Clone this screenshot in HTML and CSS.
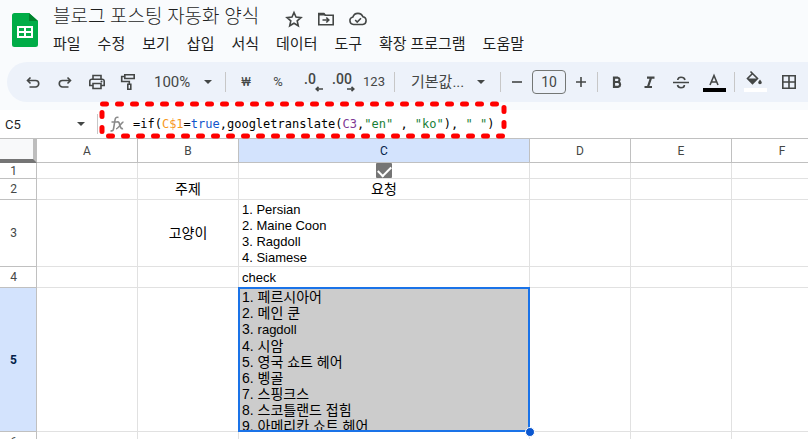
FILE: index.html
```html
<!DOCTYPE html>
<html lang="ko">
<head>
    <meta charset="UTF-8">
    <meta name="viewport" content="width=device-width, initial-scale=1.0">
    <title>블로그 포스팅 자동화 양식</title>
    <link rel="stylesheet" href="styles.css">
</head>
<body>
    <header class="header">
        <svg class="logo" viewBox="0 0 26 34" width="26" height="34">
            <path d="M2.5 0H17l9 8v23.500a2.500 2.500 0 0 1-2.500 2.500h-21A2.500 2.500 0 0 1 0 31.500v-29A2.500 2.500 0 0 1 2.500 0z" fill="#00ac47"/>
            <path d="M17 0l9 8h-9z" fill="#00832d"/>
            <path d="M5 13h16v12H5zM7 15v3h5v-3zM14 15v3h5v-3zM7 20v3h5v-3zM14 20v3h5v-3z" fill="#fff" fill-rule="evenodd"/>
        </svg>
        <div class="header-main">
            <div class="title-row">
                <h1 class="title">블로그 포스팅 자동화 양식</h1>
                <div class="title-icons">
                    <button class="icon-button" aria-label="별표">
                        <svg viewBox="0 0 18 18" width="18" height="18"><path d="M9 2.500l2 4.600 5 .5-3.800 3.300 1.100 4.900L9 13.200l-4.300 2.600 1.100-4.900L2 7.600l5-.5z" class="line"/></svg>
                    </button>
                    <button class="icon-button" aria-label="이동">
                        <svg viewBox="0 0 18 18" width="18" height="18"><path d="M1.800 14.700V3.500h5l1.500 1.800h7.900v9.400z" class="line"/><path d="M1.500 3h5.500l2 2.500H1.500z" class="solid"/><path d="M5.500 10h6M9.300 7.500l2.500 2.500-2.500 2.500" class="line"/></svg>
                    </button>
                    <button class="icon-button" aria-label="문서 상태">
                        <svg viewBox="0 0 20 18" width="20" height="18"><path d="M5.500 14.500a3.800 3.800 0 0 1-.6-7.500 5.300 5.300 0 0 1 10-.2 3.900 3.900 0 0 1-.2 7.700z" class="line"/><path d="M7.200 10l2 2 3.800-3.800" class="line"/></svg>
                    </button>
                </div>
            </div>
            <nav class="menu">
                <button>파일</button>
                <button>수정</button>
                <button>보기</button>
                <button>삽입</button>
                <button>서식</button>
                <button>데이터</button>
                <button>도구</button>
                <button>확장 프로그램</button>
                <button>도움말</button>
            </nav>
        </div>
    </header>

    <div class="toolbar">
        <button class="tool" aria-label="실행취소">
            <svg viewBox="0 0 18 18" width="18" height="18"><path d="M6.500 4.500L3.500 7.500l3 3M4 7.500h7.500a3.200 3.200 0 0 1 0 6.500H5.500" class="line"/></svg>
        </button>
        <button class="tool" aria-label="재실행">
            <svg viewBox="0 0 18 18" width="18" height="18"><path d="M11.500 4.500l3 3-3 3M14 7.500H6.500a3.200 3.200 0 0 0 0 6.500h6" class="line"/></svg>
        </button>
        <button class="tool" aria-label="인쇄">
            <svg viewBox="0 0 18 18" width="18" height="18"><path d="M5 6V2.500h8V6M5 12.500H1.800V8.300A2 2 0 0 1 3.800 6.200h10.400a2 2 0 0 1 2 2.100v4.200H13M5 10.500h8v5H5z" class="line"/><circle cx="13.500" cy="8.500" r="1" class="solid"/></svg>
        </button>
        <button class="tool" aria-label="서식 복사">
            <svg viewBox="0 0 18 18" width="18" height="18"><path d="M4.800 1.800h9.400v3.700H4.800zM4.800 3.500H1.700V8.500h7.600v2.500M7.800 11.200h3v5h-3z" class="line"/></svg>
        </button>
        <div class="select-box zoom">
            <select aria-label="확대/축소"><option>100%</option></select>
        </div>
        <span class="divider"></span>
        <button class="tool symbol">₩</button>
        <button class="tool symbol">%</button>
        <button class="tool decimal" aria-label="소수점 이하 자릿수 감소">
            <span>.0</span>
            <svg viewBox="0 0 8 6" width="8" height="6"><path d="M8 3H1.500M3.500.800L1.200 3l2.300 2.200" class="line"/></svg>
        </button>
        <button class="tool decimal" aria-label="소수점 이하 자릿수 증가">
            <span>.00</span>
            <svg viewBox="0 0 8 6" width="8" height="6"><path d="M0 3h6.500M4.500.800L6.800 3 4.500 5.200" class="line"/></svg>
        </button>
        <button class="tool number">123</button>
        <span class="divider"></span>
        <div class="select-box font">
            <select aria-label="글꼴"><option>기본값...</option></select>
        </div>
        <span class="divider"></span>
        <button class="tool small" aria-label="글꼴 크기 줄이기">
            <svg viewBox="0 0 12 12" width="12" height="12"><path d="M1 6h10" class="line"/></svg>
        </button>
        <input class="font-size" type="text" value="10" aria-label="글꼴 크기">
        <button class="tool small" aria-label="글꼴 크기 늘리기">
            <svg viewBox="0 0 12 12" width="12" height="12"><path d="M1 6h10M6 1v10" class="line"/></svg>
        </button>
        <span class="divider"></span>
        <button class="tool" aria-label="굵게">
            <svg viewBox="0 0 18 18" width="18" height="18"><path d="M5 4.700h3.800a2.200 2.200 0 0 1 0 4.300H5zM5 9h4.300a2.500 2.500 0 0 1 0 4.800H5z" class="line thick"/></svg>
        </button>
        <button class="tool" aria-label="기울임꼴">
            <svg viewBox="0 0 18 18" width="18" height="18"><path d="M6 4.700h7.500M3.500 14h7.500M10.100 4.700L6.900 14" class="line thick"/></svg>
        </button>
        <button class="tool" aria-label="취소선">
            <svg viewBox="0 0 18 18" width="18" height="18"><path d="M0 9.500h16M12 7C11.500 5.100 10 4.300 8 4.300S5 5 4.700 7M4.500 12c.4 1.800 1.700 2.700 3.500 2.700s3.400-.900 3.400-2.700" class="line"/></svg>
        </button>
        <button class="tool" aria-label="텍스트 색상">
            <svg viewBox="0 0 24 24" width="24" height="24"><path d="M8 15l4-9.500 4 9.500M9.500 12h5" class="line"/><path d="M1 18h23v4H1z" fill="#000"/></svg>
        </button>
        <span class="divider"></span>
        <button class="tool" aria-label="채우기 색상">
            <svg viewBox="0 0 24 24" width="24" height="24"><path d="M7.500 1.500l7 7-5 5-5-5 5-5" class="line"/><path d="M4.500 8.500h10l-5 5.200z" class="solid"/><path d="M17 9.500c1 1.300 1.800 2.200 1.800 3a1.800 1.800 0 0 1-3.600 0c0-.8.800-1.700 1.800-3z" class="solid"/><path d="M1 18h23v4H1z" fill="#fff"/></svg>
        </button>
        <button class="tool borders" aria-label="테두리">
            <svg viewBox="0 0 14 14" width="14" height="14"><path d="M.8.800h12.400v12.400H.8zM7 1v12M1 7h12" class="line"/></svg>
        </button>
    </div>

    <div class="formula-bar">
        <div class="select-box name-box">
            <input type="text" value="C5" aria-label="이름 상자">
        </div>
        <span class="divider"></span>
        <svg class="fx" viewBox="0 0 14 16" width="14" height="16"><path d="M8.500 1.500C6 .8 5.300 2 5 4L3.600 12.500C3.300 14.500 2.500 15.300.5 14.700M1.500 6h6M7 6c2-.6 2.300 1 2.800 3s1.200 4.300 3.200 3.500M13.500 6c-2 0-5 6.800-7.500 6.800"/></svg>
        <div class="formula" role="textbox" contenteditable="true" spellcheck="false" aria-label="수식">=if(<span class="ref-orange">C$1</span>=<span class="bool">true</span>,googletranslate(<span class="ref-purple">C3</span>,<span class="string">"en"</span> , <span class="string">"ko"</span>), <span class="string">" "</span>)</div>
        <svg class="highlight" viewBox="0 0 408 38" width="408" height="38"><path d="M3.500 3H405V35H3V5"/></svg>
    </div>

    <main class="sheet">
        <table class="grid">
            <colgroup>
                <col class="col-index">
                <col class="col">
                <col class="col">
                <col class="col-wide">
                <col class="col">
                <col class="col">
                <col class="col">
            </colgroup>
            <thead>
                <tr>
                    <td class="corner"></td>
                    <th>A</th>
                    <th>B</th>
                    <th class="active">C</th>
                    <th>D</th>
                    <th>E</th>
                    <th>F</th>
                </tr>
            </thead>
            <tbody>
                <tr class="row-1">
                    <th>1</th>
                    <td></td>
                    <td></td>
                    <td class="check-cell"><input type="checkbox" class="checkbox" aria-label="C1" checked></td>
                    <td></td>
                    <td></td>
                    <td></td>
                </tr>
                <tr class="row-2">
                    <th>2</th>
                    <td></td>
                    <td class="center">주제</td>
                    <td class="center">요청</td>
                    <td></td>
                    <td></td>
                    <td></td>
                </tr>
                <tr class="row-3">
                    <th>3</th>
                    <td></td>
                    <td class="center">고양이</td>
                    <td class="latin">1. Persian<br>2. Maine Coon<br>3. Ragdoll<br>4. Siamese</td>
                    <td></td>
                    <td></td>
                    <td></td>
                </tr>
                <tr class="row-4">
                    <th>4</th>
                    <td></td>
                    <td></td>
                    <td class="latin">check</td>
                    <td></td>
                    <td></td>
                    <td></td>
                </tr>
                <tr class="row-5">
                    <th class="active">5</th>
                    <td></td>
                    <td></td>
                    <td class="selected">
                        <div class="clip">1. 페르시아어<br>2. 메인 쿤<br>3. <span class="latin">ragdoll</span><br>4. 시암<br>5. 영국 쇼트 헤어<br>6. 벵골<br>7. 스핑크스<br>8. 스코틀랜드 접힘<br>9. 아메리칸 쇼트 헤어</div>
                        <span class="handle"></span>
                    </td>
                    <td></td>
                    <td></td>
                    <td></td>
                </tr>
                <tr class="row-6">
                    <th>6</th>
                    <td></td>
                    <td></td>
                    <td></td>
                    <td></td>
                    <td></td>
                    <td></td>
                </tr>
            </tbody>
        </table>
    </main>
</body>
</html>
```
FILE: styles.css
```css
:root {
    --page: #f9fbfd;
    --toolbar: #edf2fa;
    --icon: #444746;
    --text: #1f1f1f;
    --line: #e1e1e1;
    --line-dark: #c0c0c0;
    --active: #d3e3fd;
    --blue: #1a73e8;
    --sans: "Liberation Sans", "Noto Sans CJK KR", sans-serif;
    --ui: Roboto, "Noto Sans CJK KR", sans-serif;
}

* {
    box-sizing: border-box;
    margin: 0;
    padding: 0;
}

body {
    display: flex;
    flex-direction: column;
    height: 100vh;
    overflow: hidden;
    background: var(--page);
    color: var(--text);
    font-family: var(--ui);
}

button,
input,
select {
    border: none;
    background: none;
    color: inherit;
    font-family: inherit;
}

.line {
    fill: none;
    stroke: var(--icon);
    stroke-width: 1.6;
}

.thick {
    stroke-width: 2.2;
}

.solid {
    fill: var(--icon);
}

/* Header */
.header {
    display: flex;
    flex: none;
    gap: 15px;
    height: 62px;
    padding-left: 12px;
}

.logo {
    flex: none;
    margin-top: 13px;
}

.title-row {
    display: flex;
    align-items: center;
    gap: 25px;
    height: 34px;
}

.title {
    font-size: 19px;
    font-weight: 300;
    line-height: 34px;
    white-space: nowrap;
}

.title-icons {
    display: flex;
    gap: 12px;
    padding-top: 4px;
}

.icon-button {
    display: flex;
    align-items: center;
    justify-content: center;
    width: 20px;
    height: 20px;
}

.menu {
    display: flex;
    gap: 17px;
}

.menu button {
    font-size: 15px;
    line-height: 20px;
    white-space: nowrap;
}

/* Toolbar */
.toolbar {
    display: flex;
    flex: none;
    align-items: center;
    height: 40px;
    margin-left: 7px;
    padding-left: 10px;
    border-radius: 20px 0 0 20px;
    background: var(--toolbar);
    color: var(--icon);
}

.tool {
    display: flex;
    flex: none;
    align-items: center;
    justify-content: center;
    width: 32px;
    height: 32px;
    font-size: 14px;
}

.tool.small {
    width: 24px;
}

.tool.symbol,
.tool.number {
    padding-bottom: 2px;
    font-size: 13px;
}

.tool.borders {
    width: 36px;
}

.decimal {
    flex-direction: column;
    font-weight: 500;
    line-height: 14px;
}

.decimal svg {
    align-self: flex-end;
    margin-right: 3px;
}

.divider {
    flex: none;
    width: 1px;
    height: 20px;
    margin: 0 4px;
    background: #c7c7c7;
}

.select-box {
    position: relative;
    flex: none;
}

.select-box::after {
    content: "";
    position: absolute;
    top: 50%;
    right: 9px;
    margin-top: -2px;
    border: 4px solid transparent;
    border-top-color: var(--icon);
    border-bottom: none;
    pointer-events: none;
}

.select-box select {
    width: 100%;
    height: 32px;
    appearance: none;
    font-size: 15px;
}

.zoom {
    width: 76px;
    padding-left: 9px;
}

.font {
    width: 97px;
    padding-left: 12px;
}

.font::after {
    right: 11px;
}

.font-size {
    flex: none;
    width: 34px;
    height: 24px;
    margin: 0 3px;
    border: 1px solid #747775;
    border-radius: 4px;
    font-size: 14px;
    text-align: center;
}

/* Formula bar */
.formula-bar {
    position: relative;
    display: flex;
    flex: none;
    align-items: center;
    height: 28px;
    margin-top: 8px;
    background: #fff;
}

.name-box {
    width: 93px;
    padding-left: 5px;
}

.name-box::after {
    right: 8px;
}

.name-box input {
    display: block;
    width: 60px;
    height: 18px;
    font-size: 13px;
}

.fx {
    flex: none;
    margin: 0 9px 0 8px;
    fill: none;
    stroke: #8a8a8a;
    stroke-width: 1.6;
}

.formula {
    flex: 1;
    outline: none;
    color: #000;
    font-family: "DejaVu Sans Mono", monospace;
    font-size: 12px;
    white-space: pre;
}

.ref-orange {
    color: #f7981d;
}

.ref-purple {
    color: #7e3794;
}

.bool {
    color: #1155cc;
}

.string {
    color: #188038;
}

.highlight {
    position: absolute;
    top: -9px;
    left: 99px;
    z-index: 2;
    fill: none;
    stroke: #f00;
    stroke-width: 5;
    stroke-linecap: round;
    stroke-dasharray: 4 11;
    pointer-events: none;
}

/* Sheet */
.sheet {
    flex: 1;
    min-height: 0;
    overflow: hidden;
    border-top: 1px solid var(--line-dark);
    background: #fff;
}

.grid {
    width: 833px;
    table-layout: fixed;
    border-collapse: separate;
    border-spacing: 0;
    color: #000;
    font-family: var(--sans);
    font-size: 14px;
    line-height: 16px;
}

.col-index {
    width: 37px;
}

.col {
    width: 101px;
}

.col-wide {
    width: 291px;
}

.grid td {
    padding: 2px 3px 0;
    border-right: 1px solid var(--line);
    border-bottom: 1px solid var(--line);
}

.grid th {
    border-right: 1px solid var(--line-dark);
    border-bottom: 1px solid var(--line-dark);
    color: var(--icon);
    font-family: Roboto, sans-serif;
    font-size: 12px;
    font-weight: 400;
    line-height: 14px;
}

.grid thead tr {
    height: 24px;
}

.grid tbody th {
    padding-right: 9px;
}

.grid th.active {
    background: var(--active);
    color: #041e49;
}

.grid tbody th.active {
    font-weight: 700;
}

.grid .corner {
    border-right: 4px solid #bdbdbd;
    border-bottom: 4px solid #757575;
    background: #f8f9fa;
}

.row-1 {
    height: 16px;
}

.row-2,
.row-4,
.row-6 {
    height: 21px;
}

.row-3 {
    height: 67px;
}

.row-5 {
    height: 144px;
}

.grid .center {
    padding-top: 0;
    text-align: center;
}

.grid .latin {
    font-size: 13px;
}

.grid .check-cell {
    padding: 0;
}

.checkbox {
    display: block;
    width: 16px;
    height: 15px;
    margin: 0 auto;
    appearance: none;
    border-radius: 1px;
    background: #757575;
}

.checkbox:checked::before {
    content: "";
    display: block;
    width: 11px;
    height: 6px;
    margin: 0 auto;
    border-bottom: 2px solid #fff;
    border-left: 2px solid #fff;
    transform: translateY(3px) rotate(-45deg);
}

.grid .selected {
    position: relative;
    padding: 0 3px;
    background: #ccc;
}

.selected::after {
    content: "";
    position: absolute;
    inset: -1px;
    border: 2px solid var(--blue);
}

.clip {
    height: 143px;
    padding-top: 1px;
    overflow: hidden;
}

.handle {
    position: absolute;
    right: -6px;
    bottom: -6px;
    z-index: 1;
    width: 10px;
    height: 10px;
    border: 1px solid #fff;
    border-radius: 50%;
    background: #0b57d0;
}
```
